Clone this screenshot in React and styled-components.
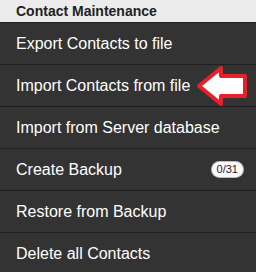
import React from 'react';
import styled, { createGlobalStyle } from 'styled-components';

const GlobalStyle = createGlobalStyle`
  html, body {
    margin: 0;
    padding: 0;
    background: #333;
  }
`;

const items = [
  { label: 'Export Contacts to file' },
  { label: 'Import Contacts from file', arrow: true },
  { label: 'Import from Server database' },
  { label: 'Create Backup', count: '0/31' },
  { label: 'Restore from Backup' },
  { label: 'Delete all Contacts' },
];

const PointerArrow = () => (
  <svg width="52" height="44" viewBox="0 0 52 44">
    <polygon
      points="4,21 26,3 26,11 50,11 50,31 26,31 26,39"
      fill="#fff"
      stroke="#e8202a"
      strokeWidth="4"
      strokeLinejoin="round"
    />
  </svg>
);

const App = () => {
  return (
    <>
      <GlobalStyle />
      <Styled.Menu>
        <Styled.Header>Contact Maintenance</Styled.Header>
        {items.map((item) => (
          <Styled.Row key={item.label}>
            <Styled.Label>{item.label}</Styled.Label>
            {item.count && <Styled.Count>{item.count}</Styled.Count>}
            {item.arrow && (
              <Styled.Arrow>
                <PointerArrow />
              </Styled.Arrow>
            )}
          </Styled.Row>
        ))}
      </Styled.Menu>
    </>
  );
};

const Styled = {
  Menu: styled.div`
    width: 256px;
    display: flex;
    flex-direction: column;
    font-family: 'Liberation Sans', Arial, sans-serif;
    background: #333;
  `,
  Header: styled.div`
    height: 22px;
    line-height: 22px;
    padding: 0 16px;
    background: #ececec;
    color: #222;
    font-size: 14px;
    font-weight: bold;
    border-bottom: 1px solid #1f1f1f;
  `,
  Row: styled.div`
    position: relative;
    display: flex;
    align-items: center;
    justify-content: space-between;
    height: 41px;
    padding: 0 13px 0 16px;
    font-size: 16px;
    border-bottom: 1px solid #1f1f1f;
    &:last-child {
      border-bottom: none;
    }
  `,
  Label: styled.span`
    color: #fff;
  `,
  Count: styled.div`
    min-width: 20px;
    height: 15px;
    padding: 0 5px;
    border-radius: 8px;
    background: #fafafa;
    color: #1c1c2e;
    font-size: 11px;
    line-height: 15px;
    text-align: center;
    box-shadow: 0 0 0 1px #bbb;
  `,
  Arrow: styled.div`
    position: absolute;
    right: 9px;
    top: 0;
    display: flex;
  `,
};

export default App;
